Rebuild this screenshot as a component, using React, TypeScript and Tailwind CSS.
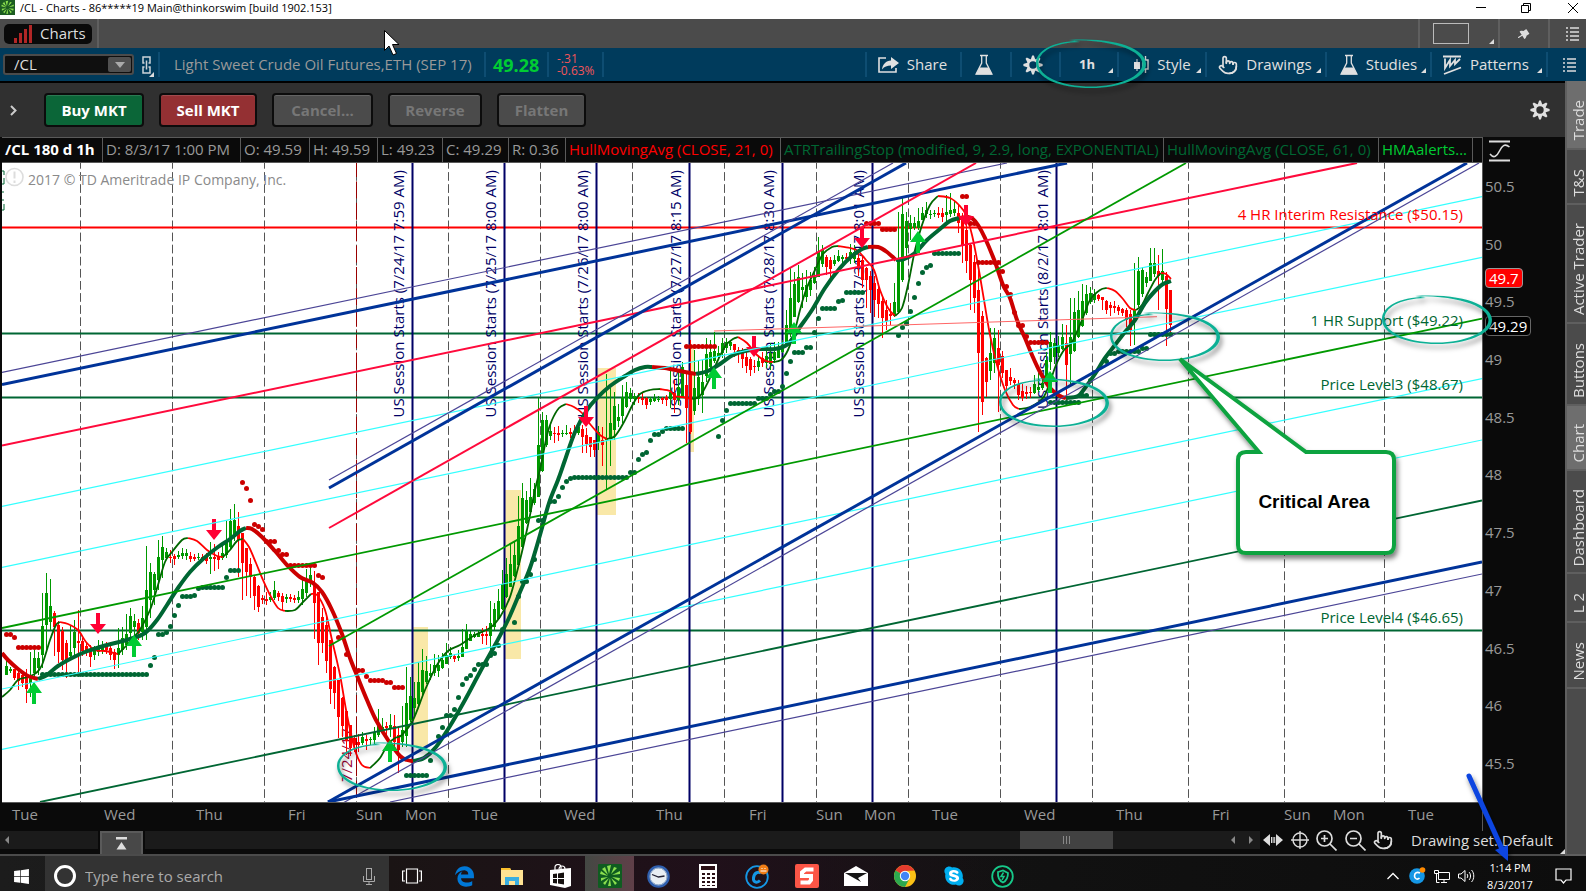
import type { ReactNode } from "react";
import { FaEdgeLegacy, FaSkype, FaWindows } from "react-icons/fa6";
import { AiFillPushpin } from "react-icons/ai";
import { LuPointer } from "react-icons/lu";

type Point = [number, number];
type Bar = [high: number, top: number, bottom: number, low: number, up: 0 | 1];

const BAR_START = 6;
const BAR_STEP = 4;

// high, body top, body bottom, low, up
const bars: Bar[] = [
  [660, 666, 675, 675, 1], [667, 669, 671, 673, 1], [669, 669, 678, 680, 0], [670, 673, 681, 690, 0], [672, 675, 683, 687, 0],
  [669, 675, 689, 703, 0], [652, 675, 683, 697, 1], [650, 658, 673, 680, 1], [652, 658, 668, 675, 1], [593, 626, 655, 668, 1],
  [573, 593, 625, 653, 1], [579, 606, 622, 630, 1], [611, 613, 627, 656, 0], [621, 625, 652, 663, 0], [627, 631, 660, 670, 0],
  [640, 643, 660, 678, 0], [626, 652, 656, 658, 1], [620, 632, 648, 655, 1], [610, 641, 643, 673, 0], [638, 641, 651, 656, 0],
  [643, 646, 652, 656, 0], [645, 649, 657, 667, 0], [646, 650, 655, 660, 1], [640, 646, 652, 656, 1], [641, 646, 651, 654, 1],
  [642, 646, 650, 654, 0], [644, 648, 655, 660, 0], [649, 652, 660, 669, 0], [628, 648, 655, 668, 1], [627, 638, 650, 655, 1],
  [614, 634, 645, 650, 1], [608, 616, 633, 645, 1], [614, 621, 627, 640, 1], [619, 623, 633, 640, 0], [606, 618, 632, 640, 1],
  [546, 590, 627, 640, 1], [563, 572, 600, 618, 1], [572, 574, 590, 605, 1], [540, 557, 580, 590, 1], [536, 547, 560, 578, 1],
  [548, 552, 558, 560, 1], [550, 557, 558, 563, 0], [554, 556, 559, 565, 0], [551, 555, 557, 559, 1], [548, 553, 556, 559, 1],
  [549, 553, 556, 560, 1], [552, 556, 559, 562, 0], [554, 557, 559, 561, 0], [553, 557, 558, 560, 1], [554, 557, 559, 561, 0],
  [553, 557, 561, 564, 0], [542, 557, 559, 574, 1], [544, 557, 559, 571, 0], [552, 557, 560, 569, 0], [546, 553, 558, 560, 1],
  [521, 540, 555, 558, 1], [509, 521, 547, 549, 1], [504, 520, 535, 541, 1], [512, 526, 540, 577, 0], [533, 533, 563, 600, 0],
  [548, 548, 572, 596, 0], [558, 564, 577, 598, 0], [576, 577, 596, 610, 0], [585, 586, 607, 612, 0], [595, 598, 600, 604, 0],
  [592, 599, 601, 605, 0], [592, 597, 600, 602, 1], [581, 590, 598, 600, 1], [591, 593, 597, 601, 0], [593, 596, 602, 611, 0],
  [594, 597, 599, 603, 1], [594, 597, 599, 602, 0], [595, 598, 600, 603, 0], [591, 597, 600, 603, 1], [579, 589, 599, 605, 1],
  [569, 579, 593, 597, 1], [566, 575, 582, 587, 1], [571, 583, 603, 639, 0], [592, 592, 643, 665, 0], [608, 617, 643, 653, 0],
  [617, 625, 661, 673, 0], [640, 640, 689, 704, 0], [666, 667, 693, 709, 0], [680, 680, 717, 738, 0], [697, 698, 726, 737, 0],
  [710, 711, 741, 755, 0], [725, 725, 748, 756, 0], [735, 738, 745, 752, 0], [734, 742, 745, 752, 0], [732, 737, 743, 745, 1],
  [735, 739, 741, 750, 0], [737, 739, 740, 745, 1], [727, 732, 740, 744, 1], [709, 725, 735, 737, 1], [718, 727, 730, 732, 1],
  [722, 726, 728, 735, 0], [714, 725, 728, 737, 1], [715, 726, 742, 752, 0], [728, 735, 750, 773, 0], [706, 730, 742, 747, 1],
  [667, 703, 736, 747, 1], [677, 696, 720, 722, 1], [682, 698, 708, 717, 1], [662, 682, 704, 706, 1], [649, 670, 692, 695, 1],
  [656, 671, 682, 684, 1], [664, 673, 676, 680, 1], [654, 665, 673, 676, 1], [655, 665, 671, 677, 1], [653, 660, 668, 669, 1],
  [643, 655, 664, 664, 1], [647, 653, 657, 659, 1], [654, 656, 659, 662, 0], [650, 656, 658, 661, 1], [629, 647, 657, 657, 1],
  [624, 631, 649, 649, 1], [631, 634, 641, 641, 1], [632, 634, 637, 638, 1], [630, 633, 637, 637, 1], [628, 634, 636, 644, 0],
  [626, 634, 636, 645, 0], [601, 623, 636, 652, 1], [603, 609, 627, 630, 1], [589, 601, 619, 620, 1], [570, 584, 609, 610, 1],
  [558, 574, 597, 598, 1], [543, 564, 587, 587, 1], [541, 555, 576, 577, 1], [496, 526, 565, 566, 1], [483, 498, 547, 548, 1],
  [491, 500, 523, 524, 1], [478, 497, 512, 513, 1], [483, 489, 503, 505, 1], [398, 445, 497, 497, 1], [412, 420, 471, 472, 1],
  [415, 420, 445, 447, 1], [425, 431, 436, 440, 1], [427, 433, 434, 443, 0], [426, 433, 435, 441, 0], [430, 433, 434, 437, 1],
  [425, 433, 434, 435, 1], [428, 432, 434, 438, 0], [425, 433, 435, 438, 0], [422, 427, 433, 435, 1], [425, 429, 437, 453, 0],
  [428, 435, 444, 453, 0], [437, 437, 447, 457, 0], [440, 440, 450, 457, 0], [426, 432, 442, 450, 1], [427, 440, 445, 466, 0],
  [374, 438, 440, 490, 1], [388, 423, 438, 466, 1], [392, 406, 430, 440, 1], [404, 417, 421, 427, 1], [385, 397, 416, 423, 1],
  [382, 392, 407, 408, 1], [388, 393, 399, 402, 1], [393, 396, 399, 405, 1], [393, 397, 399, 403, 0], [393, 398, 400, 405, 0],
  [397, 398, 405, 409, 0], [397, 399, 402, 405, 1], [394, 398, 401, 402, 1], [396, 399, 400, 402, 1], [397, 398, 400, 404, 0],
  [395, 397, 400, 406, 0], [370, 392, 399, 408, 1], [380, 393, 400, 413, 0], [370, 387, 400, 405, 1], [362, 367, 398, 398, 1],
  [373, 385, 408, 443, 0], [340, 375, 432, 434, 0], [350, 388, 411, 415, 1], [360, 377, 399, 405, 1], [360, 382, 395, 413, 1],
  [338, 354, 376, 382, 1], [340, 352, 367, 372, 1], [332, 351, 361, 363, 1], [346, 353, 356, 360, 1], [338, 343, 353, 358, 1],
  [338, 342, 348, 353, 1], [340, 342, 346, 350, 1], [344, 344, 350, 357, 0], [347, 350, 353, 363, 0], [348, 353, 359, 368, 0],
  [350, 357, 366, 373, 0], [357, 359, 370, 376, 0], [360, 366, 367, 373, 0], [357, 361, 367, 371, 1], [352, 358, 363, 367, 0],
  [350, 356, 363, 368, 1], [343, 353, 364, 370, 1], [342, 352, 360, 363, 1], [342, 350, 358, 358, 1], [340, 345, 352, 353, 1],
  [310, 325, 345, 347, 1], [268, 298, 330, 337, 1], [272, 284, 317, 317, 1], [265, 277, 302, 303, 1], [273, 287, 290, 308, 1],
  [270, 285, 297, 302, 1], [272, 280, 290, 296, 1], [267, 277, 283, 284, 1], [237, 252, 277, 277, 1], [245, 250, 264, 267, 1],
  [255, 257, 267, 275, 0], [257, 260, 269, 278, 0], [255, 260, 264, 266, 1], [250, 256, 261, 262, 1], [255, 257, 259, 263, 1],
  [253, 257, 259, 263, 0], [244, 252, 258, 264, 1], [245, 252, 259, 263, 1], [253, 258, 268, 276, 0], [255, 260, 280, 288, 0],
  [267, 268, 280, 308, 0], [271, 276, 290, 313, 0], [276, 283, 300, 317, 0], [283, 289, 304, 318, 0], [296, 301, 318, 338, 0],
  [300, 310, 321, 330, 0], [303, 314, 316, 325, 0], [283, 302, 316, 317, 1], [212, 260, 312, 314, 1], [197, 214, 280, 282, 1],
  [212, 221, 248, 260, 1], [215, 223, 229, 240, 1], [217, 223, 228, 230, 1], [208, 221, 228, 230, 1], [207, 213, 220, 220, 1],
  [202, 210, 214, 218, 1], [210, 214, 215, 219, 1], [210, 213, 214, 217, 1], [207, 213, 215, 218, 0], [208, 213, 217, 222, 0],
  [195, 212, 215, 223, 1], [193, 210, 214, 217, 1], [200, 209, 213, 216, 1], [205, 213, 223, 233, 0], [213, 220, 245, 263, 0],
  [223, 230, 261, 273, 0], [243, 245, 280, 310, 0], [255, 262, 298, 313, 0], [268, 290, 353, 432, 0], [311, 316, 402, 415, 0],
  [357, 358, 382, 397, 0], [328, 353, 371, 380, 1], [328, 338, 363, 373, 1], [330, 348, 365, 412, 0], [351, 356, 373, 378, 0],
  [370, 370, 386, 394, 0], [368, 377, 381, 385, 0], [378, 380, 383, 389, 0], [380, 384, 395, 400, 0], [384, 391, 398, 401, 0],
  [386, 392, 394, 399, 0], [387, 392, 393, 398, 0], [375, 384, 393, 394, 1], [373, 387, 390, 392, 1], [378, 383, 388, 390, 1],
  [352, 360, 382, 383, 1], [332, 342, 362, 370, 1], [338, 343, 357, 364, 1], [336, 345, 353, 357, 1], [324, 337, 349, 350, 1],
  [325, 343, 365, 405, 0], [298, 337, 354, 387, 1], [298, 312, 351, 352, 1], [291, 310, 337, 338, 1], [284, 301, 326, 327, 1],
  [285, 294, 313, 315, 1], [287, 293, 302, 304, 1], [289, 294, 300, 303, 1], [294, 295, 299, 301, 0], [297, 297, 300, 310, 0],
  [300, 301, 310, 314, 0], [302, 305, 308, 316, 0], [301, 306, 308, 313, 0], [305, 307, 311, 315, 0], [308, 309, 313, 316, 0],
  [308, 310, 320, 327, 0], [310, 314, 330, 346, 0], [263, 310, 320, 345, 1], [257, 271, 305, 307, 1], [267, 270, 294, 297, 1],
  [272, 277, 283, 287, 1], [248, 263, 281, 281, 1], [248, 263, 274, 277, 1], [255, 271, 276, 310, 0], [249, 271, 280, 285, 1],
  [272, 276, 309, 346, 0], [290, 290, 325, 332, 0],
];

type Segment = { up: boolean; pts: Point[] };

const fastAverage: Segment[] = [
  { up: true, pts: [[2, 697], [10, 690], [18, 680], [28, 677], [36, 673], [42, 665], [50, 640], [56, 625], [60, 622]] },
  { up: false, pts: [[60, 622], [68, 624], [78, 630], [86, 642], [95, 650], [105, 651], [118, 654]] },
  { up: true, pts: [[118, 654], [126, 646], [134, 637], [141, 628], [150, 610], [158, 585], [165, 562], [172, 552], [182, 540], [188, 538]] },
  { up: false, pts: [[188, 538], [197, 541], [207, 550], [217, 556], [223, 557]] },
  { up: true, pts: [[223, 557], [230, 550], [237, 541], [243, 539]] },
  { up: false, pts: [[243, 539], [249, 547], [256, 563], [263, 580], [270, 595], [278, 608], [285, 611]] },
  { up: true, pts: [[285, 611], [295, 610], [303, 602], [311, 594]] },
  { up: false, pts: [[311, 594], [317, 595], [325, 610], [332, 640], [340, 675], [347, 715], [355, 750], [362, 765], [370, 768]] },
  { up: true, pts: [[370, 768], [380, 758], [388, 744], [395, 738], [402, 735], [413, 720], [425, 690], [437, 665], [448, 651], [460, 645], [475, 635], [490, 628], [500, 617], [510, 597], [520, 560], [528, 525], [535, 490], [541, 465], [547, 435], [552, 420], [559, 408], [566, 404]] },
  { up: false, pts: [[566, 404], [574, 407], [582, 413], [590, 424], [600, 435], [607, 439]] },
  { up: true, pts: [[607, 439], [615, 436], [624, 422], [633, 404], [640, 394], [650, 390], [660, 389]] },
  { up: false, pts: [[660, 389], [670, 391], [675, 396], [682, 397], [692, 399]] },
  { up: true, pts: [[692, 399], [700, 396], [709, 380], [718, 360], [726, 345], [733, 339], [738, 337]] },
  { up: false, pts: [[738, 337], [747, 343], [757, 355], [766, 361], [773, 362]] },
  { up: true, pts: [[773, 362], [781, 360], [788, 350], [795, 330], [800, 310], [806, 290], [815, 270], [823, 254], [832, 247], [838, 246]] },
  { up: false, pts: [[838, 246], [850, 248], [858, 251], [866, 260], [874, 270], [880, 290], [888, 308], [895, 316]] },
  { up: true, pts: [[895, 316], [902, 308], [908, 285], [915, 250], [922, 225], [930, 205], [938, 196]] },
  { up: false, pts: [[938, 196], [950, 198], [959, 205], [966, 215], [972, 235], [978, 265], [984, 300], [990, 335], [997, 365], [1005, 390], [1013, 405], [1019, 409]] },
  { up: true, pts: [[1019, 409], [1030, 407], [1043, 398], [1050, 382], [1056, 365], [1064, 350], [1072, 342], [1082, 320], [1090, 300], [1100, 290], [1107, 288]] },
  { up: false, pts: [[1107, 288], [1115, 291], [1123, 299], [1130, 308], [1136, 310]] },
  { up: true, pts: [[1136, 310], [1142, 305], [1148, 293], [1155, 280], [1161, 273]] },
  { up: false, pts: [[1161, 273], [1166, 274], [1171, 279]] },
];

const slowAverage: Segment[] = [
  { up: false, pts: [[2, 653], [8, 660], [18, 669], [28, 676], [38, 679]] },
  { up: true, pts: [[38, 679], [47, 675], [58, 666], [72, 658], [85, 652], [100, 647], [115, 643], [130, 639], [145, 633], [157, 620], [167, 605], [178, 588], [190, 572], [203, 559], [218, 547], [230, 539], [240, 531], [246, 528]] },
  { up: false, pts: [[246, 528], [252, 529], [262, 537], [275, 551], [288, 566], [300, 577], [313, 583], [322, 592], [332, 610], [342, 634], [350, 658], [358, 678], [367, 700], [376, 720], [388, 740], [400, 756], [407, 760], [413, 761]] },
  { up: true, pts: [[413, 761], [424, 758], [436, 747], [450, 726], [465, 700], [480, 672], [495, 645], [508, 620], [520, 592], [530, 568], [540, 535], [549, 503], [558, 480], [565, 460], [575, 432], [587, 410], [597, 398], [610, 386], [625, 376], [635, 370], [645, 367], [652, 367]] },
  { up: false, pts: [[652, 367], [665, 368], [680, 371], [696, 374]] },
  { up: true, pts: [[696, 374], [708, 371], [720, 364], [733, 355], [745, 351], [760, 349], [775, 349], [788, 344], [800, 327], [812, 310], [825, 288], [840, 268], [852, 256], [862, 249], [868, 247]] },
  { up: false, pts: [[868, 247], [878, 247], [887, 252], [896, 260]] },
  { up: true, pts: [[896, 260], [904, 259], [915, 253], [927, 240], [940, 229], [950, 221], [959, 218]] },
  { up: false, pts: [[959, 218], [968, 217], [973, 219], [978, 225], [985, 238], [995, 262], [1003, 285], [1010, 298], [1017, 320], [1025, 338], [1032, 355], [1040, 372], [1050, 388], [1060, 396], [1066, 398]] },
  { up: true, pts: [[1066, 398], [1078, 396], [1085, 388], [1095, 374], [1105, 358], [1115, 345], [1125, 332], [1135, 320], [1145, 303], [1155, 291], [1163, 284], [1171, 281]] },
];

// x of the first dot, y, how many bars the level holds
type Stop = [number, number, number];

const stopsAbove: Stop[] = [
  [6, 634, 2], [14, 637, 1], [18, 647, 6], [242, 482, 1], [246, 488, 1], [250, 500, 1], [254, 524, 1], [258, 526, 1], [262, 529, 1],
  [266, 541, 3], [278, 550, 1], [282, 554, 2], [290, 565, 7], [318, 575, 1], [322, 577, 1], [338, 637, 1], [346, 654, 1],
  [358, 670, 2], [366, 676, 1], [370, 680, 4], [386, 682, 2], [394, 687, 3], [686, 346, 8], [866, 223, 4], [882, 229, 4],
  [962, 196, 2], [970, 223, 2], [978, 262, 6], [1002, 271, 1], [1006, 286, 1], [1010, 294, 1], [1014, 312, 1], [1018, 325, 2],
  [1026, 336, 1], [1030, 342, 5],
];

const stopsBelow: Stop[] = [
  [42, 674, 27], [150, 665, 1], [154, 657, 1], [158, 634, 2], [166, 632, 1], [170, 626, 1], [174, 615, 1], [178, 605, 1],
  [182, 596, 3], [194, 595, 1], [198, 588, 1], [202, 587, 6], [226, 577, 1], [230, 570, 3], [406, 775, 6], [430, 760, 1],
  [438, 736, 1], [442, 727, 1], [446, 715, 2], [454, 709, 1], [458, 697, 1], [462, 684, 1], [466, 678, 1], [470, 675, 1],
  [474, 669, 1], [478, 664, 3], [490, 655, 1], [494, 653, 1], [498, 645, 1], [502, 629, 1], [514, 622, 1], [518, 596, 1],
  [522, 581, 2], [530, 574, 1], [534, 559, 1], [538, 520, 2], [550, 501, 2], [558, 496, 1], [562, 487, 1], [566, 481, 1],
  [570, 478, 1], [574, 477, 14], [630, 472, 2], [638, 459, 1], [642, 454, 1], [646, 452, 1], [650, 440, 1], [654, 434, 2],
  [662, 431, 1], [666, 428, 5], [718, 436, 1], [722, 420, 1], [726, 410, 1], [730, 403, 7], [758, 398, 3], [770, 394, 1],
  [774, 391, 2], [782, 386, 1], [786, 373, 1], [790, 361, 1], [794, 352, 3], [806, 347, 2], [814, 332, 1], [818, 318, 1],
  [822, 308, 4], [838, 301, 1], [842, 300, 1], [846, 292, 5], [898, 335, 1], [902, 327, 1], [906, 323, 1], [910, 311, 1],
  [914, 297, 1], [918, 283, 1], [922, 272, 1], [926, 267, 1], [930, 265, 1], [934, 253, 7], [1050, 402, 8], [1082, 395, 2],
  [1090, 380, 1], [1094, 372, 1], [1106, 361, 1], [1110, 353, 2], [1118, 351, 6], [1142, 348, 2], [1150, 334, 6],
];

const sellArrows: Point[] = [[98, 634], [214, 540], [586, 427], [754, 357], [862, 248], [966, 226]];
const buyArrows: Point[] = [[34, 682], [134, 635], [390, 740], [714, 367], [794, 322], [918, 231], [1050, 371]];

const dayLines = [80.5, 172.5, 264.5, 356.5, 448.5, 540.5, 632.5, 724.5, 816.5, 908.5, 1000.5, 1092.5, 1188.5, 1284.5, 1384.5];

const sessions: [number, string][] = [
  [412.5, "7/24/17 7:59 AM"],
  [504.5, "7/25/17 8:00 AM"],
  [596.5, "7/26/17 8:00 AM"],
  [689.5, "7/27/17 8:15 AM"],
  [782.5, "7/28/17 8:30 AM"],
  [872.5, "7/31/17 8:01 AM"],
  [1056.5, "8/2/17 8:01 AM"],
];

// x1, y1, x2, y2, colour, stroke width
const trendLines: [number, number, number, number, string, number][] = [
  [2, 506.3, 1482, 196.7, "#33ffff", 1.2],
  [2, 567.3, 1482, 257.3, "#33ffff", 1.2],
  [2, 689, 1482, 378.7, "#33ffff", 1.2],
  [2, 749.3, 1482, 440, "#33ffff", 1.2],
  [2, 372.3, 1007, 163, "#4b4596", 1.2],
  [2, 384.5, 1067, 163, "#003399", 3],
  [2, 445.5, 1357, 163, "#ff0a3c", 2],
  [329, 528, 976, 163, "#ff0a3c", 2],
  [329, 480, 893, 163, "#4b4596", 1.2],
  [329, 488, 906, 163, "#003399", 3],
  [2, 628, 1482, 318.7, "#009900", 1.8],
  [329, 646, 1186, 163, "#009900", 1.8],
  [40, 802, 1482, 500.5, "#006633", 1.8],
  [328, 802, 1467, 163, "#003399", 3],
  [343, 803, 1479, 163, "#4b4596", 1.2],
  [328, 802, 1482, 562, "#003399", 3],
  [390, 802, 1482, 574, "#4b4596", 1.2],
  [714, 331, 1157, 316.7, "#ff6666", 1],
];

const levels: [number, string, string][] = [
  [227.5, "4 HR Interim Resistance ($50.15)", "#ff0000"],
  [333.5, "1 HR Support ($49.22)", "#006633"],
  [397.5, "Price Level3 ($48.67)", "#006633"],
  [630.5, "Price Level4 ($46.65)", "#006633"],
];

const readouts: [string, string][] = [
  ["/CL 180 d 1h", "w-[101px] font-bold text-white"],
  ["D: 8/3/17 1:00 PM", "w-[138px] text-[#999]"],
  ["O: 49.59", "w-[69px] text-[#999]"],
  ["H: 49.59", "w-[68px] text-[#999]"],
  ["L: 49.23", "w-[65px] text-[#999]"],
  ["C: 49.29", "w-[66px] text-[#999]"],
  ["R: 0.36", "w-[57px] text-[#999]"],
  ["HullMovingAvg (CLOSE, 21, 0)", "w-[215px] text-[#ff0000]"],
  ["ATRTrailingStop (modified, 9, 2.9, long, EXPONENTIAL)", "w-[383px] text-[#006633]"],
  ["HullMovingAvg (CLOSE, 61, 0)", "w-[215px] text-[#006633]"],
  ["HMAalerts...", "w-[94px] text-[#00cc33]"],
];

const prices = ["50.5", "50", "49.5", "49", "48.5", "48", "47.5", "47", "46.5", "46", "45.5"];

const days: [string, number][] = [
  ["Tue", 92], ["Wed", 92], ["Thu", 92], ["Fri", 68], ["Sun", 49], ["Mon", 67], ["Tue", 92], ["Wed", 92], ["Thu", 93], ["Fri", 67],
  ["Sun", 48], ["Mon", 68], ["Tue", 92], ["Wed", 92], ["Thu", 96], ["Fri", 72], ["Sun", 49], ["Mon", 75], ["Tue", 74],
];

const sideTabs: [string, string][] = [
  ["Trade", "h-[69px] bg-[#6e6e6e]"],
  ["T&S", "h-[55px] bg-[#4b4b4b]"],
  ["Active Trader", "h-[119px] bg-[#4b4b4b]"],
  ["Buttons", "h-[82px] bg-[#4b4b4b]"],
  ["Chart", "h-[65px] bg-[#6e6e6e]"],
  ["Dashboard", "h-[103px] bg-[#4b4b4b]"],
  ["L 2", "h-[49px] bg-[#4b4b4b]"],
  ["News", "h-[66px] bg-[#4b4b4b]"],
];

function smooth(pts: Point[]) {
  let d = `M${pts[0][0]} ${pts[0][1]}`;
  for (let i = 0; i < pts.length - 1; i++) {
    const a = pts[i - 1] ?? pts[i];
    const b = pts[i];
    const c = pts[i + 1];
    const e = pts[i + 2] ?? c;
    d += `C${b[0] + (c[0] - a[0]) / 6} ${b[1] + (c[1] - a[1]) / 6} ${c[0] - (e[0] - b[0]) / 6} ${c[1] - (e[1] - b[1]) / 6} ${c[0]} ${c[1]}`;
  }
  return d;
}

function Stops({ rows, color }: { rows: Stop[]; color: string }) {
  return (
    <g fill={color}>
      {rows.flatMap(([x, y, count]) =>
        Array.from({ length: count }, (_, i) => <circle key={`${x}-${i}`} cx={x + 0.5 + i * BAR_STEP} cy={y + 0.5} r="2.5" />),
      )}
    </g>
  );
}

function PriceChart() {
  return (
    <svg className="block min-h-0 w-full flex-1 bg-white" viewBox="2 163 1480 639" preserveAspectRatio="none" fontSize="15">
      <g fill="#f9e8a8">
        <rect x="413" y="627" width="15" height="120" />
        <rect x="505" y="490" width="16" height="169" />
        <rect x="597" y="368" width="19" height="147" />
        <rect x="690" y="348" width="4" height="104" />
      </g>

      {dayLines.map((x) => (
        <path key={x} d={`M${x} 160V802`} stroke="#555" strokeDasharray="8.7 3.4" />
      ))}
      <path d="M356.5 160V802" stroke="#990000" strokeDasharray="17 4.4" />

      {levels.map(([y, , color]) => (
        <g key={y} stroke={color}>
          <path d={`M2 ${y}H1482`} strokeWidth="3" opacity="0.5" />
          <path d={`M2 ${y}H1482`} />
        </g>
      ))}

      {sessions.map(([x]) => (
        <g key={x} stroke="#000066">
          <path d={`M${x} 163V802`} strokeWidth="3" opacity="0.5" />
          <path d={`M${x} 163V802`} />
        </g>
      ))}

      <text transform="translate(352 782) rotate(-90)" fill="#990033">7/24/17</text>
      {sessions.map(([x, label]) => (
        <text key={x} transform={`translate(${x - 8.5} 170) rotate(-90)`} textAnchor="end" fill="#000066">
          US Session Starts ({label})
        </text>
      ))}

      {bars.map(([high, top, bottom, low, up], i) => {
        const x = BAR_START + i * BAR_STEP;
        return (
          <g key={i} fill={up ? "#009900" : "#ff0000"}>
            <rect x={x} y={high} width="1" height={low - high} />
            <rect x={x - 1} y={top} width="3" height={Math.max(bottom - top, 1)} />
          </g>
        );
      })}

      <g fill="none" strokeWidth="1.8">
        {fastAverage.map(({ up, pts }) => (
          <path key={pts[0][0]} d={smooth(pts)} stroke={up ? "#006600" : "#ff0000"} />
        ))}
      </g>
      <g fill="none" strokeWidth="4">
        {slowAverage.map(({ up, pts }) => (
          <path key={pts[0][0]} d={smooth(pts)} stroke={up ? "#006633" : "#cc0000"} />
        ))}
      </g>
      <Stops rows={stopsAbove} color="#cc0000" />
      <Stops rows={stopsBelow} color="#006633" />

      {sellArrows.map(([x, y]) => (
        <path key={x} d={`M${x} ${y}l-8 -10h6v-11h4v11h6z`} fill="#ff0033" />
      ))}
      {buyArrows.map(([x, y]) => (
        <path key={x} d={`M${x} ${y}l-8 11h6v11h4v-11h6z`} fill="#00cc33" />
      ))}

      {trendLines.map(([x1, y1, x2, y2, color, width], i) => (
        <line key={i} x1={x1} y1={y1} x2={x2} y2={y2} stroke={color} strokeWidth={width} />
      ))}

      {levels.map(([y, label, color]) => (
        <text key={y} x="1463" y={y - 8} textAnchor="end" fill={color}>
          {label}
        </text>
      ))}

      <path d="M2 171h2v4M4 178v6h-2M2 192h2M2 200h2M2 210h2v-6" fill="none" stroke="#006633" />
      <circle cx="14.5" cy="177" r="8.5" fill="#fff" stroke="#ddd" strokeWidth="1.6" />
      <path d="M14.5 171.5v7M14.5 180.5v2.5" stroke="#ddd" strokeWidth="2" />
      <text x="28" y="185" fill="#8a8a8a" fontSize="14">
        2017 © TD Ameritrade IP Company, Inc.
      </text>
    </svg>
  );
}

function Corner() {
  return (
    <svg className="absolute right-1 bottom-1 size-[5px]" viewBox="0 0 5 5">
      <path d="M5 0v5H0z" fill="#ddd" />
    </svg>
  );
}

function Gear({ className }: { className: string }) {
  return (
    <svg className={className} viewBox="-10 -10 20 20">
      <g fill="#e0e0e0">
        {[0, 45, 90, 135, 180, 225, 270, 315].map((a) => (
          <path key={a} d="M-2.4 -5L-0.9 -9.6H0.9L2.4 -5z" transform={`rotate(${a})`} />
        ))}
      </g>
      <circle r="4.8" fill="none" stroke="#e0e0e0" strokeWidth="2.2" />
    </svg>
  );
}

function Flask() {
  return (
    <svg className="h-[22px] w-[18px]" viewBox="0 0 18 22">
      <path d="M5 1.5h8M6.7 2v7L1 20.2h16L11.3 9V2" fill="none" stroke="#e0e0e0" strokeWidth="1.3" />
      <path d="M4.5 13.5h9L17 20.5H1z" fill="#e0e0e0" />
    </svg>
  );
}

function ListIcon() {
  return (
    <svg className="h-[14px] w-[13px]" viewBox="0 0 13 14" stroke="#ddd" strokeWidth="1.5">
      <path d="M0 1h2M4 1h9M0 5h2M4 5h9M0 9h2M4 9h9M0 13h2M4 13h9" />
    </svg>
  );
}

function Leaves() {
  return (
    <g fill="#8be04e">
      <path d="M11 10L9 2l4-1zM13 10l3-7 3 1zM14 11l8-4v3zM14 13l8 1-1 3zM13 14l6 5-2 2zM12 14l1 8h-3zM11 14l-4 7-2-2zM10 13l-7 4v-3zM10 12L2 10l1-3zM10 11L4 5l3-2z" />
    </g>
  );
}

function Tool({ width, label, children, corner = true }: { width: string; label: string; children?: ReactNode; corner?: boolean }) {
  return (
    <button aria-label={label} className={`relative my-1 flex items-center justify-center gap-2 border-l-2 border-[#0e4d72] text-[#e0e0e0] ${width}`}>
      {children}
      {corner && <Corner />}
    </button>
  );
}

function TitleBar() {
  return (
    <header className="flex h-[19px] items-center bg-white pb-1 text-[11px] text-black">
      <svg className="size-[15px]" viewBox="0 0 24 24">
        <rect width="24" height="24" fill="#1c5c22" />
        <Leaves />
      </svg>
      <h1 className="ml-[5px] flex-1 leading-4">/CL - Charts - 86*****19 Main@thinkorswim [build 1902.153]</h1>
      <button aria-label="Minimize" className="w-[46px]">
        <svg className="mx-auto h-3 w-3" viewBox="0 0 12 12"><path d="M1 5.5h10" stroke="#000" /></svg>
      </button>
      <button aria-label="Restore" className="w-[43px]">
        <svg className="mx-auto h-3 w-3" viewBox="0 0 12 12"><path d="M1.5 3.5h7v7h-7zM3.5 3V1.5h7v7H9" fill="none" stroke="#000" /></svg>
      </button>
      <button aria-label="Close" className="w-[39px] pl-3">
        <svg className="mx-auto h-3 w-3" viewBox="0 0 12 12"><path d="M1 1l10 10M11 1L1 11" stroke="#000" /></svg>
      </button>
    </header>
  );
}

function TabBar() {
  return (
    <nav className="flex h-[29px] bg-[#4b4b4b]">
      <div className="flex w-[99px] items-center border-r-2 border-[#5f5f5f] pl-1">
        <a href="#charts" className="flex h-5 w-[88px] items-center gap-2 rounded-[5px] bg-[#0a0a0a] pl-[10px] text-[15px] text-[#ddd]">
          <svg className="h-[18px] w-[18px]" viewBox="0 0 18 18" fill="#b22626">
            <path d="M0 13h3v5H0zM5 8h3v10H5zM10 4h3v14h-3zM15 0h3v18h-3z" />
          </svg>
          Charts
        </a>
      </div>
      <div className="flex-1" />
      <button aria-label="Layout grid" className="relative w-[80px] border-l-2 border-[#5f5f5f] pl-[13px]">
        <span className="block h-[21px] w-[36px] border border-[#bbb]" />
        <Corner />
      </button>
      <button aria-label="Pin" className="w-[50px] border-l-2 border-[#5f5f5f]">
        <AiFillPushpin className="mx-auto size-[14px] rotate-12 text-[#ddd]" />
      </button>
      <button aria-label="Tab menu" className="flex w-[38px] items-center justify-center border-l-2 border-[#5f5f5f] pl-2">
        <ListIcon />
      </button>
    </nav>
  );
}

function SymbolBar() {
  return (
    <div className="flex h-[33px] bg-[#003b5c] text-[15px]">
      <div className="my-[6px] ml-[3px] flex w-[131px] rounded-[3px] border-2 border-[#4b4b4b] bg-[#0f0f0f]">
        <input aria-label="Symbol" defaultValue="/CL" className="w-full min-w-0 bg-transparent pl-[9px] text-[#ddd] outline-none" />
        <button aria-label="Recent symbols" className="m-px w-[23px] shrink-0 rounded-[2px] bg-[#505050]">
          <svg className="mx-auto h-[6px] w-[10px]" viewBox="0 0 10 6"><path d="M0 0h10L5 6z" fill="#aaa" /></svg>
        </button>
      </div>
      <button aria-label="Link symbol" className="relative w-[24px]">
        <svg className="mx-auto h-[18px] w-[9px]" viewBox="0 0 9 18" fill="none" stroke="#ccd3d8" strokeWidth="1.5">
          <path d="M2.5 7H1V1h7v6H6.5M2.5 11H1v6h7v-6H6.5M4.5 4.5v9" />
        </svg>
        <Corner />
      </button>
      <div className="my-1 flex w-[326px] items-center border-l-2 border-[#0e4d72] pl-[14px] whitespace-nowrap text-[#999]">Light Sweet Crude Oil Futures,ETH (SEP 17)</div>
      <div className="my-1 flex w-[63px] items-center border-l-2 border-[#0e4d72] pl-[7px] text-lg font-bold text-[#00cc33]">49.28</div>
      <div className="my-1 flex w-[57px] flex-col justify-center border-x-2 border-[#0e4d72] pl-2 text-xs leading-3 text-[#f2555a]">
        <span>-.31</span>
        <span>-0.63%</span>
      </div>
      <div className="flex-1" />
      <Tool width="w-[95px] pr-[2px]" label="Share" corner={false}>
        <svg className="h-4 w-[21px]" viewBox="0 0 21 16">
          <path d="M8 1H1v14h17v-4" fill="none" stroke="#e0e0e0" strokeWidth="1.6" />
          <path d="M13 0l8 6-8 6V8.5C9 8.5 6.5 9.500 4 12.5 4.5 7.500 8 3.5 13 3.500z" fill="#e0e0e0" />
        </svg>
        Share
      </Tool>
      <Tool width="w-[50px] pr-1" label="Edit studies" corner={false}><Flask /></Tool>
      <Tool width="w-[49px] pr-[6px]" label="Chart settings" corner={false}><Gear className="size-[20px]" /></Tool>
      <Tool width="w-[58px] pr-1" label="Timeframe"><span className="text-[13px] font-bold">1h</span></Tool>
      <Tool width="w-[88px]" label="Style">
        <svg className="h-[18px] w-[16px]" viewBox="0 0 16 18">
          <path d="M1 6h6v7H1zM3.500 3h1v12h-1z" fill="#e0e0e0" />
          <path d="M10 4h5v9h-5zM12.5 0v4M12.5 13v4" fill="none" stroke="#e0e0e0" strokeWidth="1.4" />
        </svg>
        Style
      </Tool>
      <Tool width="w-[120px] pr-[2px]" label="Drawings"><LuPointer className="size-5" />Drawings</Tool>
      <Tool width="w-[105px]" label="Studies"><Flask />Studies</Tool>
      <Tool width="w-[116px] pr-[6px]" label="Patterns">
        <svg className="h-[20px] w-[19px]" viewBox="0 0 19 20" fill="none" stroke="#e0e0e0" strokeWidth="1.8">
          <path d="M0 1.5h18M1 19l17-6.5M2 3.5V13l5-8v6l5-6v4l5-5" />
        </svg>
        Patterns
      </Tool>
      <Tool width="w-[40px] pl-1" label="Chart menu" corner={false}><ListIcon /></Tool>
    </div>
  );
}

const orderButton = "h-[34px] rounded border-2 border-[#0c0c0c] text-[15px] font-bold shadow-[inset_0_1px_0_#ffffff22]";

function OrderBar() {
  return (
    <div className="flex h-[56px] items-center gap-[15px] border-t-2 border-black bg-[#303030]">
      <button aria-label="Expand" className="w-[29px] pl-[10px]">
        <svg className="h-[11px] w-[7px]" viewBox="0 0 7 11"><path d="M1 1l4.5 4.5L1 10" fill="none" stroke="#ccc" strokeWidth="2" /></svg>
      </button>
      <button className={`${orderButton} w-[100px] bg-[#0b6638] text-white`}>Buy MKT</button>
      <button className={`${orderButton} w-[98px] bg-[#943033] text-white`}>Sell MKT</button>
      <button className={`${orderButton} w-[101px] bg-[#4b4b4b] text-[#777]`}>Cancel...</button>
      <button className={`${orderButton} w-[94px] bg-[#4b4b4b] text-[#777]`}>Reverse</button>
      <button className={`${orderButton} w-[89px] bg-[#4b4b4b] text-[#777]`}>Flatten</button>
      <button aria-label="Order settings" className="mr-[15px] ml-auto"><Gear className="size-[20px]" /></button>
    </div>
  );
}

function ChartPanel() {
  return (
    <div className="flex flex-1">
      <div className="flex min-w-0 flex-1 flex-col pl-[2px]">
        <div className="flex h-[26px] border-y border-[#5a5a5a] text-[15px] leading-[22px]">
          {readouts.map(([text, style]) => (
            <div key={text} className={`shrink-0 overflow-hidden border-r border-[#5a5a5a] pl-[3px] whitespace-nowrap ${style}`}>{text}</div>
          ))}
        </div>
        <PriceChart />
        <div className="flex h-[29px] border-t border-[#5a5a5a] pl-[10px] text-[15px] leading-[22px] text-[#999]">
          {days.map(([day, span], i) => (
            <span key={i} className="basis-0" style={{ flexGrow: span }}>{day}</span>
          ))}
        </div>
      </div>
      <div className="flex w-[83px] flex-col border-l border-[#5a5a5a]">
        <div className="h-[26px] pl-[6px]">
          <svg className="h-[26px] w-[21px]" viewBox="0 0 21 26" fill="none" stroke="#ddd">
            <path d="M0 4.5h21M0 23.5h21" strokeWidth="2.2" />
            <path d="M1 17c4 5 7 2 9.500-3s5-8 10-4" strokeWidth="1.6" />
          </svg>
        </div>
        <div className="relative flex flex-1 flex-col justify-between pt-[13px] pb-[29px] pl-[2px] text-[15px] leading-5 text-[#999]">
          {prices.map((p) => <span key={p}>{p}</span>)}
          <span className="absolute top-[105px] left-[2px] h-5 rounded border border-[#999] bg-[#ff0000] px-[3px] leading-[18px] text-white">49.7</span>
          <span className="absolute top-[153px] left-[2px] h-5 rounded border border-[#666] bg-black px-[3px] leading-[18px] text-white">49.29</span>
        </div>
        <div className="h-[29px]" />
      </div>
    </div>
  );
}

function ScrollRow() {
  return (
    <div className="flex h-[25px] border-b-2 border-[#4b4b4b]">
      <button aria-label="Scroll left" className="h-[18px] w-[98px] bg-[#1b1b1b]">
        <svg className="ml-[5px] h-2 w-1" viewBox="0 0 4 8"><path d="M4 0v8L0 4z" fill="#888" /></svg>
      </button>
      <button aria-label="Show panel" className="mx-[2px] w-[43px] border-x-2 border-t-2 border-[#5a5a5a] bg-[#484848]">
        <svg className="mx-auto h-[13px] w-[11px]" viewBox="0 0 11 13"><path d="M0 0h11v2.5H0zM5.5 5l5 7.5h-10z" fill="#ddd" /></svg>
      </button>
      <div className="flex h-[18px] flex-1 bg-[#1b1b1b]">
        <div className="flex-1" />
        <div className="flex h-full w-[93px] items-center justify-center gap-[2px] bg-[#424242]">
          <i className="h-2 w-px bg-[#888]" />
          <i className="h-2 w-px bg-[#888]" />
          <i className="h-2 w-px bg-[#888]" />
        </div>
        <div className="flex w-[147px] items-center justify-end gap-[14px] pr-[7px]">
          <svg className="h-2 w-1" viewBox="0 0 4 8"><path d="M4 0v8L0 4z" fill="#888" /></svg>
          <svg className="h-2 w-1" viewBox="0 0 4 8"><path d="M0 0v8l4-4z" fill="#888" /></svg>
        </div>
      </div>
      <div className="flex h-[18px] w-[133px] items-center justify-between pl-[3px]">
        <svg className="h-[14px] w-5" viewBox="0 0 20 14" fill="#ddd"><path d="M7 1v12L0 7zM13 1v12l7-6zM8 4h1v6H8zM9.600 4h1v6h-1zM11.200 4h1v6h-1z" /></svg>
        <svg className="size-[18px]" viewBox="0 0 18 18" fill="none" stroke="#ddd" strokeWidth="1.4"><circle cx="9" cy="9" r="7" /><path d="M9 0v18M0 9h18" /></svg>
        <svg className="size-[21px]" viewBox="0 0 21 21" fill="none" stroke="#ddd" strokeWidth="1.7"><circle cx="8.5" cy="8.5" r="7.5" /><path d="M14 14l6.5 6.5M5 8.5h7M8.5 5v7" /></svg>
        <svg className="size-[21px]" viewBox="0 0 21 21" fill="none" stroke="#ddd" strokeWidth="1.7"><circle cx="8.5" cy="8.5" r="7.5" /><path d="M14 14l6.5 6.5M5 8.5h7" /></svg>
        <LuPointer className="size-5 text-[#ddd]" />
      </div>
      <button className="relative ml-[18px] w-[154px] pb-[5px] text-left text-[15px] leading-[18px] whitespace-nowrap text-[#ddd]">
        Drawing set: Default
        <svg className="absolute right-0 bottom-0 size-[5px]" viewBox="0 0 5 5"><path d="M5 0v5H0z" fill="#ddd" /></svg>
      </button>
    </div>
  );
}

function AppIcon({ label, children, active = false }: { label: string; children: ReactNode; active?: boolean }) {
  return (
    <button aria-label={label} className={`flex h-full w-[49px] items-center justify-center pt-[5px] ${active ? "bg-gradient-to-r from-[#434843] to-[#5f3f48]" : ""}`}>
      {children}
    </button>
  );
}

function Taskbar() {
  return (
    <footer className="flex h-[35px] bg-gradient-to-r from-[#1c1c1c] via-[#131313] to-[#0d0d0d]">
      <button aria-label="Start" className="flex w-[45px] items-center pt-[5px] pl-[13px]"><FaWindows className="size-[17px] text-white" /></button>
      <label className="flex w-[344px] items-center bg-[#333] pt-[5px] pr-[14px] pl-[9px]">
        <span className="size-[22px] shrink-0 rounded-full border-[3px] border-white" />
        <input aria-label="Search" placeholder="Type here to search" className="ml-[9px] min-w-0 flex-1 bg-transparent text-[15px] text-[#aaa] outline-none placeholder:text-[#aaa]" />
        <svg className="h-[17px] w-[12px]" viewBox="0 0 12 17" fill="none" stroke="#aaa"><rect x="3.5" y=".5" width="5" height="11" /><path d="M.5 8v5.5h11V8M6 13.5v3M3 16.5h6" /></svg>
      </label>
      <div className="flex bg-gradient-to-r from-[#1a1414] via-[#20101a] to-transparent">
        <AppIcon label="Task view">
          <svg className="mr-[3px] h-[16px] w-[20px]" viewBox="0 0 20 16" fill="none" stroke="#fff" strokeWidth="1.2"><path d="M4.5 1h11v14h-11zM3 3H.6v10H3M17 3h2.400v10H17" /></svg>
        </AppIcon>
        <AppIcon label="Edge"><FaEdgeLegacy className="ml-1 size-[21px] text-[#0078d7]" /></AppIcon>
        <AppIcon label="File Explorer">
          <svg className="h-[19px] w-[22px]" viewBox="0 0 22 19"><path d="M0 1h9l1 2h12v15H0z" fill="#ffe293" /><path d="M0 1h9l1 2H0z" fill="#fbc02d" /><path d="M4 18v-8h14v8h-4v-4H8v4z" fill="#3aaee0" /></svg>
        </AppIcon>
        <AppIcon label="Store">
          <svg className="h-[24px] w-[21px]" viewBox="0 0 21 24"><path d="M0 6l21-2v18l-6 2-15-3z" fill="#fff" /><path d="M5 6V3a3 2.5 0 0 1 6 0v2M9 5a3 3 0 0 1 6 0" fill="none" stroke="#fff" strokeWidth="1.2" /><path d="M3 10l4-.5v4.500H3zM8 9.500l6-1V14H8zM3 15h4v4.500L3 19zM8 15h6v5.500l-6-1z" fill="#15100f" /></svg>
        </AppIcon>
        <AppIcon label="thinkorswim" active>
          <svg className="size-[24px]" viewBox="0 0 24 24"><rect width="24" height="24" rx="1" fill="#0f5c20" /><Leaves /></svg>
        </AppIcon>
        <AppIcon label="Clock">
          <svg className="size-[23px]" viewBox="0 0 23 23"><circle cx="11.5" cy="11.5" r="9.8" fill="#e8eef2" stroke="#2f5fae" strokeWidth="3" /><circle cx="11.5" cy="11.5" r="8.6" fill="none" stroke="#9fb4cc" /><path d="M5 9.500l6.5 2.500 6-1" fill="none" stroke="#223" strokeWidth="1.3" /></svg>
        </AppIcon>
        <AppIcon label="Calculator">
          <svg className="h-[24px] w-[18px]" viewBox="0 0 18 24"><path d="M0 0h18v24H0z" fill="#fff" /><path d="M2 2h14v4H2zM3 9h3v2H3zM8 9h3v2H8zM13 9h3v2h-3zM3 13h3v2H3zM8 13h3v2H8zM13 13h3v2h-3zM3 17h3v2H3zM8 17h3v2H8zM13 17h3v2h-3zM3 21h3v1H3zM8 21h3v1H8zM13 21h3v1h-3z" fill="#2b1016" /></svg>
        </AppIcon>
        <AppIcon label="Collab">
          <svg className="ml-[2px] size-[25px]" viewBox="0 0 25 25"><circle cx="12" cy="13" r="10.8" fill="none" stroke="#1597e5" strokeWidth="1.8" /><path d="M16 9c-3-2-7 0-7.5 5s4 5 6.500 2.500" fill="none" stroke="#1597e5" strokeWidth="3" /><circle cx="18.5" cy="5.5" r="5" fill="#ef7d16" /><path d="M15.5 7h6M17 4v1M20 4v1" stroke="#fff" /></svg>
        </AppIcon>
        <AppIcon label="Snagit">
          <svg className="ml-[2px] size-[24px]" viewBox="0 0 24 24"><rect width="24" height="24" rx="2" fill="#fb5546" /><path d="M18.5 5.500h-8L7 8.500v3.500h9v4l-2 2.500H5.500" fill="none" stroke="#fff" strokeWidth="4" /></svg>
        </AppIcon>
        <AppIcon label="Mail">
          <svg className="ml-[2px] h-[20px] w-[24px]" viewBox="0 0 24 20"><path d="M0 7l12-7 12 7v13H0z" fill="#fff" /><path d="M1 7h22l-9 5 3 4z" fill="#151515" /></svg>
        </AppIcon>
        <AppIcon label="Chrome">
          <svg className="ml-[2px] size-[22px]" viewBox="-11 -11 22 22"><circle r="11" fill="#fbc116" /><path d="M0 0L-9.5 -5.5A11 11 0 0 1 9.5 -5.5L0 -5z" fill="#e33b2e" /><path d="M-9.5 -5.5A11 11 0 0 0 0 11L4.5 2.5 0 0z" fill="#2da94f" /><circle r="5.2" fill="#fff" /><circle r="4.2" fill="#4285f4" /></svg>
        </AppIcon>
        <AppIcon label="Skype">
          <span className="relative ml-[2px] flex"><i className="absolute inset-1 rounded-full bg-white" /><FaSkype className="relative size-[22px] text-[#00aff0]" /></span>
        </AppIcon>
        <AppIcon label="Security">
          <svg className="ml-[2px] size-[23px]" viewBox="0 0 23 23" fill="none" stroke="#17c98a"><circle cx="11.5" cy="11.5" r="10.3" strokeWidth="1.8" /><path d="M7 7l5-1.5L17 8c0 5-2 8-5 9.500C9 16 6.500 13 7 7z" strokeWidth="1.8" /><path d="M12.5 7.500l-2.500 4h3l-2 3.500" strokeWidth="1.5" /></svg>
        </AppIcon>
      </div>
      <div className="ml-auto flex items-center gap-2 pt-1 text-white">
        <svg className="mr-[2px] h-2 w-3" viewBox="0 0 12 8"><path d="M.5 7L6 1.5 11.500 7" fill="none" stroke="#fff" strokeWidth="1.3" /></svg>
        <svg className="size-[17px]" viewBox="0 0 17 17"><circle cx="8" cy="9" r="7.8" fill="#1597e5" /><path d="M11 6c-3-1.500-5.500 0-5.500 3s3 4 5 2" fill="none" stroke="#fff" strokeWidth="1.6" /><circle cx="13.5" cy="3" r="2.8" fill="#ff8a00" /></svg>
        <svg className="h-[14px] w-[16px]" viewBox="0 0 16 14" fill="none" stroke="#fff"><path d="M4.5 3.500h11v7h-11zM.5 1.500h4v3h-4zM2.500 5v8.500h3M10 10.500v3M7 13.500h6" /></svg>
        <svg className="h-[14px] w-[17px]" viewBox="0 0 17 14" fill="none" stroke="#fff"><path d="M.5 5v4h2.500l4 3.500v-11L3 5zM9 5c1 1 1 3 0 4M11 3c2 2 2 6 0 8M13.500 1c3 3 3 9 0 12" /></svg>
        <div className="w-[54px] text-center text-[11px] leading-[17px]">
          <div>1:14 PM</div>
          <div>8/3/2017</div>
        </div>
        <svg className="mr-[14px] ml-[10px] h-[16px] w-[17px]" viewBox="0 0 17 16" fill="none" stroke="#fff" strokeWidth="1.2"><path d="M1 1h15v11h-5l-2.500 3L6 12H1z" /></svg>
      </div>
    </footer>
  );
}

const rings: Point[] = [[392, 767], [1054, 403], [1165, 337], [1437, 320], [1091, 64]];

function Markup() {
  return (
    <svg className="pointer-events-none absolute inset-0 h-full w-full" viewBox="0 0 1586 891" preserveAspectRatio="none">
      <defs>
        <filter id="soft" x="-20%" y="-20%" width="140%" height="150%">
          <feDropShadow dx="2" dy="4" stdDeviation="2.5" floodColor="#000" floodOpacity="0.5" />
        </filter>
      </defs>
      {rings.map(([x, y]) => (
        <path
          key={x}
          filter="url(#soft)"
          fill="#0cb095"
          fillRule="evenodd"
          transform={`translate(${x} ${y})`}
          d="M-22 -24C30 -27 55 -13 55 0C55 14 30 24 0 24C-32 24 -55 14 -55 -1C-55 -13 -38 -23 -12 -23M-11 -22C-38 -21.5 -52.5 -12 -52.5 -1C-52.5 12 -30 22.5 0 22.5C28 22.5 51.5 12 51.5 0C51.5 -12 28 -24 -22 -24z"
        />
      ))}
      <path
        filter="url(#soft)"
        d="M1259 452L1180 359L1306 452H1386Q1394 452 1394 460V545Q1394 553 1386 553H1246Q1238 553 1238 545V460Q1238 452 1246 452z"
        fill="#fff"
        stroke="#0fa33f"
        strokeWidth="4"
      />
      <text x="1314" y="508" textAnchor="middle" fontFamily="Liberation Sans, Arial, sans-serif" fontWeight="bold" fontSize="19">Critical Area</text>
      <g filter="url(#soft)">
        <path d="M1469 776L1502 849" stroke="#0a45e0" strokeWidth="5" strokeLinecap="round" />
        <path d="M1495 850L1508 845L1508 861z" fill="#0a45e0" />
      </g>
      <path d="M384.5 30.5v20l4.500-4.500 4 9 3.500-1.500-4-9h6.500z" fill="#fff" stroke="#000" />
    </svg>
  );
}

export default function App() {
  return (
    <div className="relative flex min-h-screen flex-col overflow-hidden bg-[#0a0a0a] font-['Open_Sans','Noto_Sans',sans-serif]">
      <TitleBar />
      <TabBar />
      <SymbolBar />
      <main className="flex flex-1">
        <div className="flex min-w-0 flex-1 flex-col">
          <OrderBar />
          <ChartPanel />
          <ScrollRow />
        </div>
        <aside className="w-[21px] overflow-hidden border-b-2 border-l-2 border-[#5f5f5f] bg-[#4b4b4b]">
          {sideTabs.map(([label, style]) => (
            <button key={label} className={`flex w-8 items-center border-b-2 border-[#5f5f5f] pt-3 pl-px text-[15px] text-[#ddd] ${style}`}>
              <span className="mx-auto rotate-180 leading-5 whitespace-nowrap [writing-mode:vertical-rl]">{label}</span>
            </button>
          ))}
        </aside>
      </main>
      <Taskbar />
      <Markup />
    </div>
  );
}
